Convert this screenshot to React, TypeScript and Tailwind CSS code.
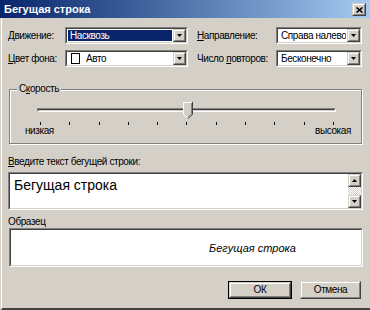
import React from 'react';

const sunkenOuter = 'border border-t-[#808080] border-l-[#808080] border-b-white border-r-white';
const sunkenInner = 'border border-t-[#404040] border-l-[#404040] border-b-[#d4d0c8] border-r-[#d4d0c8]';
const raisedOuter = 'border border-t-[#d4d0c8] border-l-[#d4d0c8] border-b-[#404040] border-r-[#404040]';
const raisedInner = 'border border-t-white border-l-white border-b-[#808080] border-r-[#808080]';

function U({ children }: { children: React.ReactNode }) {
  return <span className="underline underline-offset-[1px]">{children}</span>;
}

function Arrow({ up = false }: { up?: boolean }) {
  return (
    <svg width="5" height="3" viewBox="0 0 5 3" className="block">
      <polygon points={up ? '0,3 5,3 2.5,0' : '0,0 5,0 2.5,3'} fill="#000" />
    </svg>
  );
}

function DropButton() {
  return (
    <div className={`${raisedOuter} w-[13px] h-full`}>
      <div className={`${raisedInner} h-full bg-[#d4d0c8] flex items-center justify-center`}>
        <Arrow />
      </div>
    </div>
  );
}

interface ComboProps {
  className: string;
  children: React.ReactNode;
  selected?: boolean;
}

function Combo({ className, children, selected }: ComboProps) {
  return (
    <div className={`${sunkenOuter} h-[17px] ${className}`}>
      <div className={`${sunkenInner} h-full bg-white flex`}>
        <div className="flex-1 flex items-center p-[1px] min-w-0">
          <div
            className={`h-full w-full flex items-center pl-[2px] whitespace-nowrap overflow-hidden ${
              selected ? 'bg-[#0a246a] text-white' : 'text-black'
            }`}
          >
            {children}
          </div>
        </div>
        <DropButton />
      </div>
    </div>
  );
}

function Thumb() {
  return (
    <svg width="10" height="17" viewBox="0 0 10 17" className="block">
      <polygon points="0,0 10,0 10,12 5,17 0,12" fill="#d4d0c8" />
      <polyline points="0.5,12 0.5,0.5 9,0.5" fill="none" stroke="#fff" strokeWidth="1" />
      <polyline points="9.5,0 9.5,12.2 5,16.7" fill="none" stroke="#404040" strokeWidth="1" />
      <polyline points="8.5,1 8.5,11.8 5,15.3" fill="none" stroke="#808080" strokeWidth="1" />
      <line x1="0.5" y1="12" x2="4.5" y2="16" stroke="#fff" strokeWidth="1" />
    </svg>
  );
}

function Button({ children, isDefault }: { children: React.ReactNode; isDefault?: boolean }) {
  const face = (
    <div className={`${raisedOuter} h-full`}>
      <div className={`${raisedInner} h-full bg-[#d4d0c8] flex items-center justify-center text-[10px]`}>
        {children}
      </div>
    </div>
  );
  return isDefault ? (
    <div className="w-[64px] h-[18px] border border-black">{face}</div>
  ) : (
    <div className="w-[61px] h-[18px]">{face}</div>
  );
}

export default function App() {
  const ticks = Array.from({ length: 11 }, (_, i) => i);

  return (
    <div
      className="w-[370px] h-[310px] bg-[#d4d0c8] flex flex-col overflow-hidden text-black text-[10px] leading-[12px] tracking-[-0.4px]"
      style={{ fontFamily: '"Liberation Sans", Arial, sans-serif' }}
    >
      {/* title bar */}
      <div className="h-[18px] shrink-0 flex items-center bg-gradient-to-r from-[#0a246a] to-[#a6caf0] pl-[4px] pr-[4px]">
        <span className="text-white font-bold text-[11px] leading-[14px] tracking-normal flex-1">Бегущая строка</span>
        <div className={`${raisedOuter} w-[14px] h-[13px] mt-[1px]`}>
          <div className={`${raisedInner} h-full bg-[#d4d0c8] flex items-center justify-center`}>
            <svg width="7" height="6" viewBox="0 0 7 6" className="block">
              <path d="M0.5 0.5 L6.5 5.5 M6.5 0.5 L0.5 5.5" stroke="#000" strokeWidth="1.6" />
            </svg>
          </div>
        </div>
      </div>

      {/* body */}
      <div className="flex-1 flex flex-col ml-[1px] border-l border-white border-b-2 border-b-[#404040] pl-[6px] pr-[8px]">
        {/* row 1 */}
        <div className="flex items-center mt-[9px]">
          <div className="w-[57px]">
            <U>Д</U>вижение:
          </div>
          <Combo className="w-[123px]" selected>
            Насквозь
          </Combo>
          <div className="w-[9px]" />
          <div className="w-[79px]">
            <U>Н</U>аправление:
          </div>
          <Combo className="w-[86px]">Справа налево</Combo>
        </div>

        {/* row 2 */}
        <div className="flex items-center mt-[6px]">
          <div className="w-[57px]">
            <U>Ц</U>вет фона:
          </div>
          <Combo className="w-[123px]">
            <span className="w-[9px] h-[11px] border border-black bg-white ml-[1px] mr-[6px] shrink-0" />
            Авто
          </Combo>
          <div className="w-[9px]" />
          <div className="w-[79px]">
            Число <U>п</U>овторов:
          </div>
          <Combo className="w-[86px]">Бесконечно</Combo>
        </div>

        {/* speed group */}
        <div className="relative mt-[22px] ml-[1px] w-[353px] h-[55px] border border-[#808080] shadow-[inset_1px_1px_0_#fff,1px_1px_0_#fff]">
          <div className="absolute -top-[7px] left-[7px] px-[2px] bg-[#d4d0c8]">
            С<U>к</U>орость
          </div>
          <div className="relative ml-[27px] mt-[18px] w-[299px]">
            <div className={`${sunkenOuter} h-[4px]`}>
              <div className={`${sunkenInner} h-full`} />
            </div>
            <div className="absolute left-[146px] -top-[6px]">
              <Thumb />
            </div>
          </div>
          <div className="ml-[30px] w-[294px] mt-[10px] flex justify-between">
            {ticks.map((t) => (
              <div key={t} className="w-[1px] h-[3px] bg-black" />
            ))}
          </div>
          <div className="flex justify-between pl-[15px] pr-[10px]">
            <span>низкая</span>
            <span>высокая</span>
          </div>
        </div>

        {/* text entry */}
        <div className="mt-[12px]">
          <U>В</U>ведите текст бегущей строки:
        </div>
        <div className={`${sunkenOuter} mt-[4px] w-[355px] h-[38px]`}>
          <div className={`${sunkenInner} h-full bg-white flex`}>
            <div className="flex-1 pl-[4px] pt-[3px] text-[14px] leading-[16px] tracking-normal">Бегущая строка</div>
            <div className="w-[13px] h-full flex flex-col">
              <div className={`${raisedOuter} h-[13px]`}>
                <div className={`${raisedInner} h-full bg-[#d4d0c8] flex items-center justify-center`}>
                  <Arrow up />
                </div>
              </div>
              <div className="flex-1 bg-[repeating-conic-gradient(#ffffff_0_25%,#d4d0c8_0_50%)] bg-[length:2px_2px]" />
              <div className={`${raisedOuter} h-[13px]`}>
                <div className={`${raisedInner} h-full bg-[#d4d0c8] flex items-center justify-center`}>
                  <Arrow />
                </div>
              </div>
            </div>
          </div>
        </div>

        {/* sample */}
        <div className="mt-[6px]">Образец</div>
        <div className={`${sunkenOuter} ml-[1px] w-[354px] h-[39px]`}>
          <div className={`${sunkenInner} h-full bg-white flex items-center pl-[198px]`}>
            <span className="italic text-[11px] tracking-normal whitespace-nowrap">Бегущая строка</span>
          </div>
        </div>

        {/* buttons */}
        <div className="mt-[14px] flex justify-end gap-[8px] pr-[1px]">
          <Button isDefault>ОК</Button>
          <Button>Отмена</Button>
        </div>
      </div>
    </div>
  );
}
